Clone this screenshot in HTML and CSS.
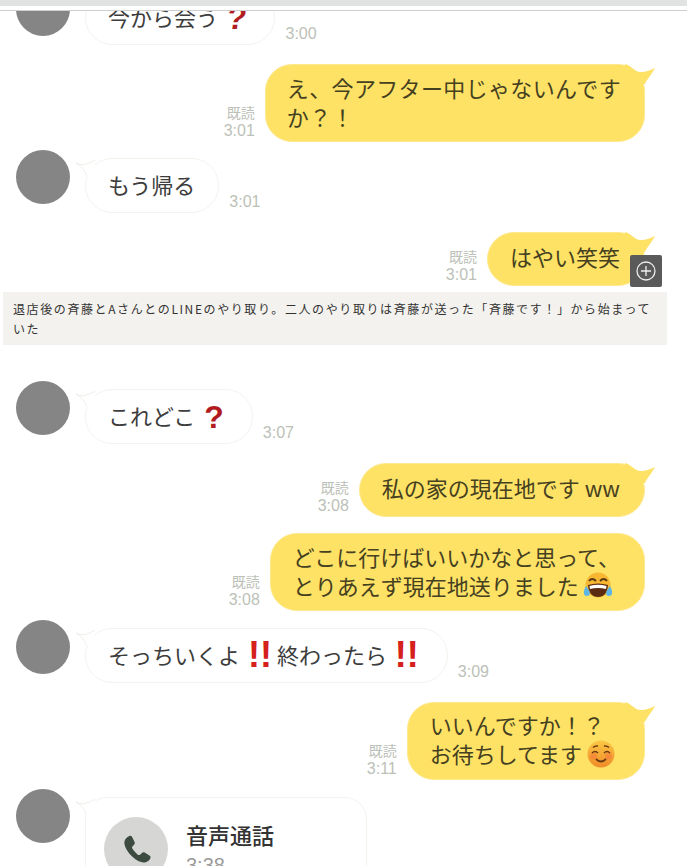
FILE: index.html
```html
<!DOCTYPE html>
<html>
<head>
    <title>LINE</title>
    <link rel="stylesheet" href="styles.css">
</head>
<body>
    <div class="top-bar"></div>
    <div class="top-line"></div>

    <div class="chat">
        <div class="row left first">
            <div class="avatar"></div>
            <div class="bubble">
                <svg class="tail-left" viewBox="0 0 22 16"><path class="tail-fill" d="M1 3 C6 6 12 5 20 0 L20 16 L11 15 C10 10 6 6 1 3 Z"/><path class="tail-line" d="M20 0 C12 5 6 6 1 3 C6 6 10 10 11 15"/></svg>
                今から会う <span class="mark slant">?</span>
            </div>
            <div class="time">3:00</div>
        </div>

        <div class="row right">
            <div class="meta"><span>既読</span>3:01</div>
            <div class="bubble multi wide">
                <svg class="tail-right" viewBox="0 0 30 20"><path d="M0 0 C6 1 9 8 16 8 C21 8 26 6 30 4 C27 10 22 15 20 20 L0 20 Z"/></svg>
                え、今アフター中じゃないんです<br>か&#xFF1F;&#xFF01;
            </div>
        </div>

        <div class="row left tighter">
            <div class="avatar"></div>
            <div class="bubble">
                <svg class="tail-left" viewBox="0 0 22 16"><path class="tail-fill" d="M1 3 C6 6 12 5 20 0 L20 16 L11 15 C10 10 6 6 1 3 Z"/><path class="tail-line" d="M20 0 C12 5 6 6 1 3 C6 6 10 10 11 15"/></svg>
                もう帰る
            </div>
            <div class="time">3:01</div>
        </div>

        <div class="row right">
            <div class="meta"><span>既読</span>3:01</div>
            <div class="bubble">
                <svg class="tail-right" viewBox="0 0 30 20"><path d="M0 0 C6 1 9 8 16 8 C21 8 26 6 30 4 C27 10 22 15 20 20 L0 20 Z"/></svg>
                はやい笑笑
                <div class="expand">
                    <svg viewBox="0 0 20 20"><circle cx="10" cy="10" r="9"/><path d="M10 5 V15 M5 10 H15"/></svg>
                </div>
            </div>
        </div>

        <p class="caption">退店後の斉藤とAさんとのLINEのやり取り。二人のやり取りは斉藤が送った「斉藤です&#xFF01;」から始まって<br>いた</p>

        <div class="row left after-caption">
            <div class="avatar"></div>
            <div class="bubble">
                <svg class="tail-left" viewBox="0 0 22 16"><path class="tail-fill" d="M1 3 C6 6 12 5 20 0 L20 16 L11 15 C10 10 6 6 1 3 Z"/><path class="tail-line" d="M20 0 C12 5 6 6 1 3 C6 6 10 10 11 15"/></svg>
                これどこ <span class="mark">?</span>
            </div>
            <div class="time">3:07</div>
        </div>

        <div class="row right">
            <div class="meta"><span>既読</span>3:08</div>
            <div class="bubble">
                <svg class="tail-right" viewBox="0 0 30 20"><path d="M0 0 C6 1 9 8 16 8 C21 8 26 6 30 4 C27 10 22 15 20 20 L0 20 Z"/></svg>
                私の家の現在地です ww
            </div>
        </div>

        <div class="row right tighter">
            <div class="meta"><span>既読</span>3:08</div>
            <div class="bubble multi">
                どこに行けばいいかなと思って、<br>とりあえず現在地送りました<svg class="emoji" viewBox="0 0 30 28">
                    <circle cx="15" cy="13" r="12.5" fill="#f7b733"/>
                    <path d="M6 9 Q9 5 13 9 M17 9 Q21 5 24 9" fill="none" stroke="#5b3a12" stroke-width="2"/>
                    <path d="M5 13 Q15 10 25 13 Q24 25 15 25 Q6 25 5 13 Z" fill="#5b2c12"/>
                    <path d="M6.500 14 Q15 11.500 23.500 14 L23 17 Q15 15 7 17 Z" fill="#fff"/>
                    <path d="M3 14 C0 19 0 24 4 24 C8 24 8 20 3 14 Z M27 14 C22 20 22 24 26 24 C30 24 30 19 27 14 Z" fill="#5db4e6"/>
                </svg>
            </div>
        </div>

        <div class="row left tight">
            <div class="avatar"></div>
            <div class="bubble">
                <svg class="tail-left" viewBox="0 0 22 16"><path class="tail-fill" d="M1 3 C6 6 12 5 20 0 L20 16 L11 15 C10 10 6 6 1 3 Z"/><path class="tail-line" d="M20 0 C12 5 6 6 1 3 C6 6 10 10 11 15"/></svg>
                そっちいくよ <span class="mark double">!!</span>終わったら <span class="mark double">!!</span>
            </div>
            <div class="time">3:09</div>
        </div>

        <div class="row right">
            <div class="meta"><span>既読</span>3:11</div>
            <div class="bubble multi smile-row">
                <svg class="tail-right" viewBox="0 0 30 20"><path d="M0 0 C6 1 9 8 16 8 C21 8 26 6 30 4 C27 10 22 15 20 20 L0 20 Z"/></svg>
                いいんですか&#xFF01;&#xFF1F;<br>お待ちしてます<svg class="emoji smile" viewBox="0 0 28 28">
                    <defs>
                        <linearGradient id="smileFace" x1="0" y1="0" x2="0" y2="1">
                            <stop offset="0" stop-color="#fbc845"/>
                            <stop offset="1" stop-color="#f08a28"/>
                        </linearGradient>
                    </defs>
                    <circle cx="14" cy="14" r="13.500" fill="url(#smileFace)"/>
                    <circle cx="6.500" cy="16" r="3.500" fill="#f4793a" opacity=".55"/>
                    <circle cx="21.500" cy="16" r="3.500" fill="#f4793a" opacity=".55"/>
                    <path d="M5 13 Q8 10 11 13 M17 13 Q20 10 23 13 M6 7.500 Q8 5.500 11 6 M17 6 Q20 5.500 22 7.500" fill="none" stroke="#6b3b12" stroke-width="1.500"/>
                    <path d="M9 19 Q14 24 19 19" fill="none" stroke="#6b3b12" stroke-width="1.800"/>
                </svg>
            </div>
        </div>

        <div class="row left tight">
            <div class="avatar"></div>
            <div class="bubble call">
                <svg class="tail-left" viewBox="0 0 22 16"><path class="tail-fill" d="M1 3 C6 6 12 5 20 0 L20 16 L11 15 C10 10 6 6 1 3 Z"/><path class="tail-line" d="M20 0 C12 5 6 6 1 3 C6 6 10 10 11 15"/></svg>
                <div class="call-icon">
                    <svg viewBox="0 0 24 24"><path d="M6.600 1.500 C5 2 3 3.500 2.600 6 C2.300 9 4.500 13 7.500 16.300 C10.700 19.700 15 22.500 18.500 22 C20.800 21.700 22.300 20.200 22.800 18.600 C23.100 17.700 22.700 17 22 16.600 L18.300 14.400 C17.500 14 16.800 14.100 16.200 14.700 L14.800 16 C14.200 16.500 13.600 16.400 13 16 C11.500 14.800 9.800 13 8.800 11.300 C8.400 10.600 8.500 10 9 9.500 L10.200 8.200 C10.800 7.500 10.800 6.800 10.400 6 L8.600 2.400 C8.200 1.600 7.400 1.300 6.600 1.500 Z"/></svg>
                </div>
                <div class="call-text">
                    <div class="call-title">音声通話</div>
                    <div class="call-time">3:38</div>
                </div>
            </div>
        </div>
    </div>
</body>
</html>
```

FILE: styles.css
```css
html, body {
    margin: 0;
    height: 866px;
    overflow: hidden;
    background-color: #fff;
}
body {
    font-family: "Noto Sans CJK JP", "Noto Sans", sans-serif;
    color: #3d3d3d;
}
.top-bar {
    height: 6px;
    background-color: #e1e2e2;
}
.top-line {
    height: 1px;
    margin-top: 4px;
    background-color: #cfcfcf;
}
.chat {
    height: 855px;
    overflow: hidden;
}
.row {
    display: flex;
    align-items: flex-end;
    margin-top: 19px;
}
.row.first {
    margin-top: -21px;
}
.row.tight {
    margin-top: 17px;
}
.row.tighter {
    margin-top: 16px;
}
.row.after-caption {
    margin-top: 44px;
}
.row.left {
    padding-left: 16px;
}
.row.right {
    justify-content: flex-end;
    padding-right: 42px;
}
.avatar {
    align-self: flex-start;
    flex: none;
    width: 54px;
    height: 54px;
    margin-top: -8px;
    margin-right: 15px;
    border-radius: 50%;
    background-color: #858585;
}
.bubble {
    position: relative;
    font-size: 22px;
    line-height: 29px;
    white-space: nowrap;
    border-radius: 27px;
}
.left .bubble {
    padding: 11px 23px 13px 22px;
    background-color: #fff;
    border: 1px solid #f4f3ee;
}
.right .bubble {
    padding: 9px 24px 14px 22px;
    background-color: #fee265;
    border: 1px solid #fee98f;
    color: #45401f;
}
.right .bubble.multi {
    padding: 8px 24px 10px 22px;
}
.right .bubble.smile-row {
    padding: 7px 29px 11px 22px;
}
.right .bubble.wide {
    padding-left: 21px;
    padding-right: 23px;
    letter-spacing: 0.350px;
}
.tail-left {
    position: absolute;
    left: -11px;
    top: 1px;
    width: 22px;
    height: 16px;
}
.tail-fill {
    fill: #fff;
}
.tail-line {
    fill: none;
    stroke: #efeee8;
    stroke-width: 1;
}
.tail-right {
    position: absolute;
    right: -11px;
    top: -1px;
    width: 30px;
    height: 20px;
}
.tail-right path {
    fill: #fee265;
}
.time {
    margin: 0 0 2px 10px;
    font-family: "Liberation Sans", Arial, sans-serif;
    font-size: 16px;
    line-height: 18px;
    color: #bcc1b8;
}
.meta {
    margin: 0 10px 2px 0;
    font-family: "Liberation Sans", Arial, sans-serif;
    font-size: 16px;
    line-height: 18px;
    text-align: right;
    color: #bcc1b8;
}
.meta span {
    display: block;
    margin-bottom: 1px;
    font-family: "Noto Sans CJK JP", sans-serif;
    font-size: 14px;
}
.mark {
    margin: 0 5px 0 4px;
    font-family: "Liberation Sans", Arial, sans-serif;
    font-size: 32px;
    font-weight: bold;
    line-height: 0;
    vertical-align: -3px;
    color: #b01c20;
}
.mark.slant {
    display: inline-block;
    transform: skewX(-8deg);
}
.mark.double {
    margin: 0 5px 0 3px;
    font-size: 36px;
    color: #d6201c;
}
.emoji {
    width: 30px;
    height: 28px;
    margin-left: 4px;
    vertical-align: -5px;
}
.emoji.smile {
    width: 28px;
    margin-left: 5px;
}
.expand {
    position: absolute;
    right: -18px;
    top: 22px;
    display: flex;
    align-items: center;
    justify-content: center;
    width: 32px;
    height: 32px;
    border-radius: 2px;
    background-color: #5a5a5a;
}
.expand svg {
    width: 20px;
    height: 20px;
}
.expand circle, .expand path {
    fill: none;
    stroke: #eee;
    stroke-width: 1.300;
}
.caption {
    margin: 6px 20px 0 3px;
    padding: 7px 10px 6px;
    font-size: 12px;
    line-height: 20px;
    letter-spacing: 1.600px;
    white-space: nowrap;
    color: #333;
    background-color: #f3f2ee;
}
.left .bubble.call {
    display: flex;
    gap: 18px;
    width: 282px;
    height: 120px;
    padding: 19px 18px;
    box-sizing: border-box;
    border-radius: 22px;
}
.call-icon {
    display: flex;
    flex: none;
    align-items: center;
    justify-content: center;
    width: 64px;
    height: 64px;
    border-radius: 50%;
    background-color: #d6d7d4;
}
.call-icon svg {
    width: 31px;
    height: 31px;
    fill: #3c4a40;
}
.call-title {
    margin-top: 3px;
    font-size: 22px;
    font-weight: 500;
    line-height: 29px;
    color: #333;
}
.call-time {
    margin-top: 5px;
    font-family: "Liberation Sans", Arial, sans-serif;
    font-size: 20px;
    line-height: 22px;
    color: #9a9a9a;
}
```
